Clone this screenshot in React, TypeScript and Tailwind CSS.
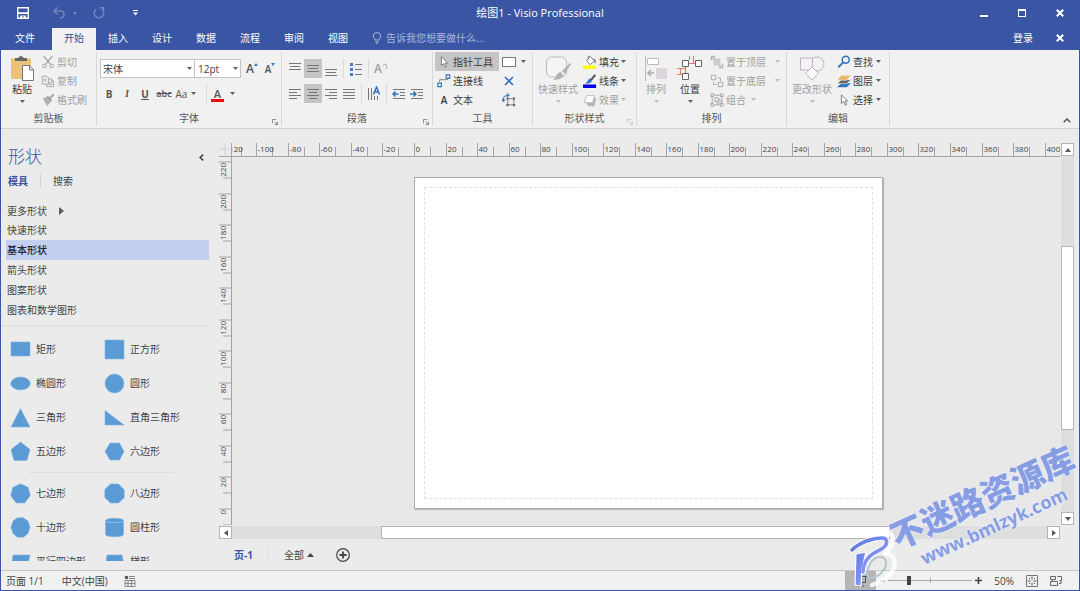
import type { ReactNode } from "react";
import clsx from "clsx";

const tabs = ["开始", "插入", "设计", "数据", "流程", "审阅", "视图"];
const stencils = ["快速形状", "基本形状", "箭头形状", "图案形状", "图表和数学图形"];

const BLUE = "#5b9bd5";
const INK = "#5a5a5a";

function Caret({ dim = false }: { dim?: boolean }) {
  return (
    <svg viewBox="0 0 5 3" className={clsx("h-[3px] w-[5px] shrink-0", dim ? "text-[#bdbdbd]" : "text-[#606060]")}>
      <path d="M0 0h5L2.500 3z" fill="currentColor" />
    </svg>
  );
}

function Icon({ children, className = "size-4", box = "0 0 16 16" }: { children: ReactNode; className?: string; box?: string }) {
  return (
    <svg viewBox={box} className={clsx("shrink-0", className)} fill="none" stroke="currentColor" aria-hidden="true">
      {children}
    </svg>
  );
}

function Group({ label, launcher, dimLauncher, className, children }: {
  label: string;
  launcher?: boolean;
  dimLauncher?: boolean;
  className?: string;
  children: ReactNode;
}) {
  return (
    <section aria-label={label} className={clsx("flex shrink-0 flex-col gap-px border-r border-[#d8d8d8]", className)}>
      <div className="h-[57px]">{children}</div>
      <div className="relative h-4 text-center leading-4 text-[#555]">
        {label}
        {launcher && (
          <button aria-label={`${label}设置`} className={clsx("absolute right-[3px] bottom-px", dimLauncher ? "text-[#c4c4c4]" : "text-[#777]")}>
            <Icon className="size-1.5" box="0 0 7 7">
              <path d="M.5 5V.5H5M3 3l3 3M6.500 3v3.500H3" />
            </Icon>
          </button>
        )}
      </div>
    </section>
  );
}

function SmallButton({ icon, label, dim, caret, active, className }: {
  icon: ReactNode;
  label: string;
  dim?: boolean;
  caret?: boolean;
  active?: boolean;
  className?: string;
}) {
  return (
    <button className={clsx("flex h-[19px] items-center gap-0.5 whitespace-nowrap", dim ? "text-[#a0a0a0]" : "text-[#3c3c3c]", active && "bg-[#c5c5c5]", className)}>
      {icon}
      <span>{label}</span>
      {caret && <span className="ml-auto"><Caret dim={dim} /></span>}
    </button>
  );
}

function BigButton({ icon, label, dim, className }: { icon: ReactNode; label: string; dim?: boolean; className?: string }) {
  return (
    <button className={clsx("flex h-[57px] flex-col items-center whitespace-nowrap pt-1", dim ? "text-[#a0a0a0]" : "text-[#3c3c3c]", className)}>
      {icon}
      <span className="leading-4">{label}</span>
      <span className="mt-[3px]"><Caret dim={dim} /></span>
    </button>
  );
}

function ToolButton({ label, active, children, className = "w-[18px]" }: { label: string; active?: boolean; children: ReactNode; className?: string }) {
  return (
    <button aria-label={label} className={clsx("flex h-[19px] shrink-0 items-center justify-center text-[#555]", active && "bg-[#c5c5c5]", className)}>
      {children}
    </button>
  );
}

const Sep = () => <span className="mx-[3px] h-[19px] w-px shrink-0 bg-[#dadada]" />;

// horizontal rules given as [y, x1, x2]
function Lines({ rows }: { rows: number[][] }) {
  return (
    <Icon className="h-4 w-3.5" box="0 0 14 16">
      {rows.map(([y, a, b]) => <path key={y} d={`M${a} ${y}.5H${b}`} stroke="#777" />)}
    </Icon>
  );
}

function Close() {
  return <Icon className="size-2" box="0 0 8 8"><path d="M.8.800l6.400 6.400M7.200.800L.8 7.200" strokeWidth="2" /></Icon>;
}

const pointer = <path d="M5 2v10l2.500-2.200L9.500 14l1.500-.8L9.200 9.300h3z" stroke="#666" fill="#fff" strokeWidth=".9" />;

function TitleBar() {
  return (
    <header className="bg-[#3955a3] text-white">
      <div className="relative flex h-[27px] items-center pb-[3px]">
        <div className="flex items-center pl-4">
          <button aria-label="保存">
            <Icon className="size-3" box="0 0 12 12">
              <path d="M.7.700h10.600v10.600H.7z" strokeWidth="1.400" />
              <path d="M1 5.300h10V7H1zM3.200 8.500h5.600V11H7V9.500H5.200V11h-2z" fill="currentColor" stroke="none" />
            </Icon>
          </button>
          <button aria-label="撤消" className="ml-6 flex items-center gap-2 text-[#7185bf]">
            <Icon className="size-3" box="0 0 12 12"><path d="M4.500.500L1 4l3.500 3.500M1 4h6.500c2 0 3.500 1.500 3.500 3.500S9.500 11 7 11" strokeWidth="1.500" /></Icon>
            <svg viewBox="0 0 4 3" className="h-[3px] w-1"><path d="M0 0h4L2 3z" fill="currentColor" /></svg>
          </button>
          <button aria-label="恢复" className="ml-4 text-[#7185bf]">
            <Icon className="size-3" box="0 0 12 12"><path d="M3 2.200A4.800 4.800 0 1 0 9 2.200M6.500.800h4v4" strokeWidth="1.500" /></Icon>
          </button>
          <button aria-label="自定义快速访问工具栏" className="ml-7">
            <Icon className="h-1.5 w-[5px]" box="0 0 5 6"><path d="M0 .5h5" /><path d="M0 2.500h5L2.500 5.500z" fill="currentColor" stroke="none" /></Icon>
          </button>
        </div>
        <h1 className="absolute inset-x-0 mx-auto w-fit text-[11px] leading-4">绘图1 - Visio Professional</h1>
        <div className="ml-auto flex items-center gap-[30px] pr-[15px]">
          <button aria-label="最小化" className="h-2 w-2 border-b-2 border-white" />
          <button aria-label="最大化" className="h-2 w-2 border border-t-2 border-white" />
          <button aria-label="关闭"><Close /></button>
        </div>
      </div>
      <nav className="flex h-[22px] items-stretch pl-[2px]">
        <button className="mr-[5px] w-11 pb-0.5">文件</button>
        {tabs.map((t, i) => (
          <button key={t} className={clsx("w-11 pb-0.5", i === 0 && "bg-[#f1f1f1] text-[#2c4aa0]")}>{t}</button>
        ))}
        <label className="ml-3 flex items-center gap-1 pb-0.5 text-[#a9b7dd]">
          <Icon className="h-3 w-2.5" box="0 0 10 12">
            <path d="M3.200 8C3.200 6.500 1.200 5.700 1.200 3.900a3.800 3.300 0 0 1 7.600 0C8.800 5.700 6.800 6.500 6.800 8zM3.200 9.800h3.600M4 11.400h2" />
          </Icon>
          <input aria-label="告诉我" placeholder="告诉我您想要做什么..." className="w-36 bg-transparent outline-none placeholder:text-[#a9b7dd]" />
        </label>
        <a href="#signin" className="ml-auto self-center pb-0.5">登录</a>
        <button aria-label="关闭文档" className="ml-[23px] pr-[15px] pb-0.5"><Close /></button>
      </nav>
    </header>
  );
}

function Ribbon() {
  return (
    <div className="flex shrink-0 border-b border-[#d2d2d2] bg-[#f1f1f1] pt-0.5 pb-0.5">
      <Group label="剪贴板" className="w-24">
        <div className="flex pl-2">
          <BigButton
            label="粘贴"
            className="w-[26px]"
            icon={
              <Icon className="h-[25px] w-6" box="0 0 24 25">
                <path d="M1 2.500h20V23H1z" fill="#ecc27b" stroke="none" />
                <path d="M5 5V2h3.500c0-2.500 5-2.500 5 0H17v3z" fill="#666" stroke="none" />
                <path d="M12.500 9.500h7l4 4.500v10.500h-11z" fill="#fff" stroke="#777" />
                <path d="M19.500 9.500V14h4" stroke="#777" />
              </Icon>
            }
          />
          <div className="ml-1.5">
            <SmallButton dim label="剪切" icon={<Icon className="size-3.5"><path d="M3 1l8 10M13 1L5 11" strokeWidth="1.400" /><circle cx="3.800" cy="12.500" r="2" /><circle cx="12.200" cy="12.500" r="2" /></Icon>} />
            <SmallButton dim label="复制" icon={<Icon className="size-3.5"><path d="M1.500 2.500h5l2 2v7h-7zM3 6h3M3 8h3M8.500 5.500h3l3 3v6h-8v-3M12 5.500v3h2.500M9 10h4M9 12h4" /></Icon>} />
            <SmallButton dim label="格式刷" icon={<Icon className="size-3.5"><path d="M2 6l6-2 4 5-5 6z" fill="#b3b3b3" stroke="none" /><path d="M14.500 1.500L9 7M7 4l5 5" strokeWidth="2.200" /></Icon>} />
          </div>
        </div>
      </Group>

      <Group label="字体" launcher className="w-[185px]">
        <div className="flex flex-col gap-1.5 pt-[7px] pl-[3px]">
          <div className="flex items-center">
            <div className="relative">
              <select aria-label="字体" className="h-[19px] w-[95px] appearance-none border border-[#c3c3c3] bg-white pl-0.5 text-[#444]">
                <option>宋体</option>
              </select>
              <span className="pointer-events-none absolute top-2 right-[3px] flex"><Caret /></span>
            </div>
            <div className="relative">
              <select aria-label="字号" className="h-[19px] w-[46px] appearance-none border border-l-0 border-[#c3c3c3] bg-white pl-[3px] text-[#444]">
                <option>12pt</option>
              </select>
              <span className="pointer-events-none absolute top-2 right-[3px] flex"><Caret /></span>
            </div>
            <ToolButton label="增大字号" className="ml-0.5 w-[18px]">
              <span className="text-xs font-semibold">A</span>
              <svg viewBox="0 0 4 3" className="mb-2 h-[3px] w-1"><path d="M2 0l2 3H0z" fill="#3a76b8" /></svg>
            </ToolButton>
            <ToolButton label="减小字号">
              <span className="text-[10px] font-semibold">A</span>
              <svg viewBox="0 0 4 3" className="mb-2 h-[3px] w-1"><path d="M0 0h4L2 3z" fill="#3a76b8" /></svg>
            </ToolButton>
          </div>
          <div className="flex items-center">
            <ToolButton label="加粗"><b>B</b></ToolButton>
            <ToolButton label="倾斜"><i className="font-serif font-bold">I</i></ToolButton>
            <ToolButton label="下划线"><b className="underline">U</b></ToolButton>
            <ToolButton label="删除线" className="w-5"><span className="text-[9px] font-semibold line-through">abc</span></ToolButton>
            <ToolButton label="更改大小写" className="w-6 gap-1"><span>Aa</span><Caret /></ToolButton>
            <span className="mr-0.5 ml-2 h-[19px] w-px bg-[#dadada]" />
            <ToolButton label="字体颜色" className="w-7 gap-1.5">
              <span className="h-4 w-[13px] border-b-[3px] border-[#ee0a0a] text-center text-[11px] leading-4 font-semibold">A</span>
              <Caret />
            </ToolButton>
          </div>
        </div>
      </Group>

      <Group label="段落" launcher className="w-[151px]">
        <div className="flex flex-col gap-1.5 pt-[7px] pl-1">
          <div className="flex">
            <ToolButton label="顶端对齐"><Lines rows={[[2, 1, 13], [5, 2, 12], [8, 1, 13]]} /></ToolButton>
            <ToolButton label="中部对齐" active><Lines rows={[[4, 1, 13], [7, 2, 12], [10, 1, 13]]} /></ToolButton>
            <ToolButton label="底端对齐"><Lines rows={[[8, 1, 13], [11, 2, 12], [14, 1, 13]]} /></ToolButton>
            <Sep />
            <ToolButton label="项目符号">
              <Icon className="h-4 w-3.5" box="0 0 14 16">
                <path d="M1 2h3v3H1zM1 7h3v3H1zM1 12h3v3H1z" fill="#3f7fc4" stroke="none" />
                <path d="M6 3.500h7M6 8.500h7M6 13.500h7" stroke="#777" />
              </Icon>
            </ToolButton>
            <Sep />
            <ToolButton label="旋转文本">
              <span className="text-xs font-semibold text-[#a0a0a0]">A</span>
              <Icon className="mb-1.5 size-1.5 text-[#a8a8a8]" box="0 0 6 6"><path d="M1 3L3 .8 5 3M3 1c2 1 2 3 1 5" /></Icon>
            </ToolButton>
          </div>
          <div className="flex">
            <ToolButton label="左对齐"><Lines rows={[[3, 1, 13], [6, 1, 9], [9, 1, 13], [12, 1, 9]]} /></ToolButton>
            <ToolButton label="居中" active><Lines rows={[[3, 1, 13], [6, 3, 11], [9, 1, 13], [12, 3, 11]]} /></ToolButton>
            <ToolButton label="右对齐"><Lines rows={[[3, 1, 13], [6, 5, 13], [9, 1, 13], [12, 5, 13]]} /></ToolButton>
            <ToolButton label="两端对齐"><Lines rows={[[3, 1, 13], [6, 1, 13], [9, 1, 13], [12, 1, 13]]} /></ToolButton>
            <Sep />
            <ToolButton label="文字方向">
              <Icon className="h-4 w-3.5" box="0 0 14 16">
                <path d="M1.500 2v12M4.500 2v12M7.500 10v4M10.500 10v4" stroke="#777" />
                <path d="M6.500 8.500L9.500 1l3 7.500M7.500 6h4" stroke="#2f74bd" strokeWidth="1.500" />
              </Icon>
            </ToolButton>
            <Sep />
            <ToolButton label="减少缩进">
              <Icon className="h-4 w-3.5" box="0 0 14 16">
                <path d="M1 3.500h12M8 6.500h5M8 9.500h5M1 12.500h12" stroke="#777" />
                <path d="M6.500 8H1M3.500 5.500L1 8l2.500 2.500" stroke="#2f74bd" strokeWidth="1.500" />
              </Icon>
            </ToolButton>
            <ToolButton label="增加缩进">
              <Icon className="h-4 w-3.5" box="0 0 14 16">
                <path d="M1 3.500h12M8 6.500h5M8 9.500h5M1 12.500h12" stroke="#777" />
                <path d="M0 8h5.500M3.500 5.500L6 8l-2.500 2.500" stroke="#2f74bd" strokeWidth="1.500" />
              </Icon>
            </ToolButton>
          </div>
        </div>
      </Group>

      <Group label="工具" className="w-[100px]">
        <div className="flex gap-[3px] pl-0.5">
          <div className="w-16">
            <SmallButton active label="指针工具" className="w-full pl-0.5" icon={<Icon className="size-3.5">{pointer}</Icon>} />
            <SmallButton label="连接线" className="w-full pl-0.5" icon={<Icon className="size-3.5"><path d="M3 9V6.500h9V5" stroke="#777" /><path d="M1 10.500h4v4H1zM10.500 1h4v4h-4z" stroke="#2f74bd" strokeWidth="1.300" /></Icon>} />
            <SmallButton label="文本" className="w-full pl-0.5" icon={<span className="w-3.5 text-center font-semibold">A</span>} />
          </div>
          <div>
            <ToolButton label="矩形工具" className="w-6 justify-start gap-[5px]">
              <span className="h-2.5 w-3.5 shrink-0 border border-[#777] bg-white" />
              <Caret />
            </ToolButton>
            <ToolButton label="连接点" className="w-3.5"><Icon className="size-2.5" box="0 0 10 10"><path d="M1 1l8 8M9 1L1 9" stroke="#2f74bd" strokeWidth="1.700" /></Icon></ToolButton>
            <ToolButton label="文本块" className="w-3.5">
              <Icon className="size-3.5">
                <path d="M6.500 6.500h7v7h-7z" stroke="#777" />
                <path d="M5 5h2.500v2.500H5zM12.500 5H15v2.500h-2.500zM5 12.500h2.500V15H5zM12.500 12.500H15V15h-2.500z" fill="#666" stroke="none" />
                <path d="M1.500 9c-.5-4 1.500-6.500 5.500-6.500M0 7l1.500 2.500L3.500 7.500M5.500.500L8 2.500 5.500 4.500" stroke="#2f74bd" strokeWidth="1.200" />
              </Icon>
            </ToolButton>
          </div>
        </div>
      </Group>

      <Group label="形状样式" launcher dimLauncher className="w-[104px]">
        <div className="flex gap-1 pl-1">
          <BigButton
            dim
            label="快速样式"
            className="w-[42px]"
            icon={
              <Icon className="h-[25px] w-[26px]" box="0 0 26 25">
                <rect x="1.500" y="1" width="20" height="20" rx="5" fill="#f6f3f6" stroke="#bdb8bd" />
                <path d="M25 7l-8 8 3 3 6-10z" fill="#b5b2b5" stroke="none" />
                <path d="M15.500 16l3 3c-1 4-6 5-11 5 4-1 3-7 8-8z" fill="#b5b2b5" stroke="none" />
              </Icon>
            }
          />
          <div className="w-[43px]">
            <SmallButton caret label="填充" className="w-full" icon={<Icon className="size-3.5"><path d="M4 6l5-4 4 5-5 4z" fill="#fff" stroke="#777" /><path d="M6 5V1.500h2" stroke="#777" /><path d="M12 4c3 1 3 4 2 6z" fill="#3a6fae" stroke="none" /><path d="M0 12h15v4H0z" fill="#ffff00" stroke="none" /></Icon>} />
            <SmallButton caret label="线条" className="w-full" icon={<Icon className="size-3.5"><path d="M14 1L9 7" stroke="#555" strokeWidth="2.500" /><path d="M10 7c0 3-3 4-8 4 3-1 3-5 6-6z" fill="#2f74bd" stroke="none" /><path d="M0 12h15v4H0z" fill="#0000e6" stroke="none" /></Icon>} />
            <SmallButton dim caret label="效果" className="w-full" icon={<Icon className="size-3.5"><path d="M3 11l3 4h7l2-8-2-3z" fill="#b9b4b9" stroke="none" /><path d="M4 3h9l-2 8H1.500z" fill="#fff" stroke="#bbb" /></Icon>} />
          </div>
        </div>
      </Group>

      <Group label="排列" className="w-[150px]">
        <div className="flex pl-1">
          <BigButton
            dim
            label="排列"
            className="w-[30px]"
            icon={
              <Icon className="h-[25px] w-6" box="0 0 24 25">
                <path d="M1.500 0v25" stroke="#bbb" />
                <path d="M3.500 2.500h11v6h-11z" fill="#fff" stroke="#bbb" />
                <path d="M12 12h11v11H12z" fill="#dcd5dc" stroke="none" />
                <path d="M10 17H4M7 14l-3 3 3 3" stroke="#aaa" strokeWidth="1.600" />
              </Icon>
            }
          />
          <BigButton
            label="位置"
            className="ml-0.5 w-[34px]"
            icon={
              <Icon className="h-[25px] w-[26px]" box="0 0 26 25">
                <path d="M11.500 7.500h7M12.500 0v4M16.500 0v7M0 12.500h8M8.500 10v8M0 18.500h5M3.500 12.500v6" stroke="#e08070" strokeWidth="1.200" />
                <path d="M5.500 4.500h6v6h-6zM18.500 4.500h6v6h-6zM5.500 17.500h6v6h-6z" fill="#fff" stroke="#666" />
              </Icon>
            }
          />
          <div className="ml-[3px] w-[70px]">
            <SmallButton dim caret label="置于顶层" className="w-full" icon={<Icon className="size-3.5"><path d="M4 4h8v8H4z" fill="#d0cad0" stroke="none" /><path d="M1.500 6V1.500H6M14.500 10v4.500H10M4 1.500v3H1M10 12.500h3" /></Icon>} />
            <SmallButton dim caret label="置于底层" className="w-full" icon={<Icon className="size-3.5"><path d="M1.500 1.500h5v5h-5zM9.500 9.500h5v5h-5zM9 4.500h3V8M4 9v3h3.500" /></Icon>} />
            <SmallButton dim caret label="组合" className="w-[46px]" icon={<Icon className="size-3.5"><path d="M1 1h3v3H1zM12 1h3v3h-3zM1 12h3v3H1zM12 12h3v3h-3zM4 2.500h8M2.500 4v8M13.500 4v8M4 13.500h8M5.500 5.500h4v4h-4zM7.500 9.500v2h4v-4h-2" /></Icon>} />
          </div>
        </div>
      </Group>

      <Group label="编辑" className="w-[103px]">
        <div className="flex gap-1 pl-1">
          <BigButton
            dim
            label="更改形状"
            className="w-[42px]"
            icon={
              <Icon className="h-[25px] w-[26px]" box="0 0 26 25">
                <circle cx="18" cy="8" r="7" fill="#f6f1f6" stroke="#bbb6bb" />
                <path d="M1.500 2h12v12h-12z" fill="#f6f1f6" stroke="#bbb6bb" />
                <path d="M13 11l6.500 6.500L13 24l-6.500-6.500z" fill="#fbf7fb" stroke="#bbb6bb" />
              </Icon>
            }
          />
          <div className="w-11">
            <SmallButton caret label="查找" className="w-full" icon={<Icon className="size-3.5"><circle cx="10" cy="5.500" r="4" stroke="#2f74bd" strokeWidth="1.700" /><path d="M7 8.500L1.500 14" stroke="#2f74bd" strokeWidth="2.200" /></Icon>} />
            <SmallButton caret label="图层" className="w-full" icon={<Icon className="size-3.5"><path d="M5 10.500h11l-5 4.500H0z" fill="#2f74bd" stroke="none" /><path d="M5 6.500h11L11 11H0z" fill="#666" stroke="#f1f1f1" strokeWidth=".7" /><path d="M5 1.500h11L11 7H0z" fill="#e8b465" stroke="#f1f1f1" strokeWidth=".7" /></Icon>} />
            <SmallButton caret label="选择" className="w-full" icon={<Icon className="size-3.5">{pointer}</Icon>} />
          </div>
        </div>
      </Group>

      <button aria-label="折叠功能区" className="mr-2 ml-auto self-end pb-[3px] text-[#555]">
        <Icon className="h-[5px] w-2" box="0 0 8 5"><path d="M.7 4.300L4 1l3.300 3.300" strokeWidth="1.500" /></Icon>
      </button>
    </div>
  );
}

const masters: { name: string; art: ReactNode }[] = [
  { name: "矩形", art: <path d="M1 3h19v14H1z" /> },
  { name: "正方形", art: <path d="M1 1h19v19H1z" /> },
  { name: "椭圆形", art: <ellipse cx="10.500" cy="10.500" rx="9.800" ry="6.500" /> },
  { name: "圆形", art: <circle cx="10.500" cy="10.500" r="9.500" /> },
  { name: "三角形", art: <path d="M10.500 1.500L20 20H1z" /> },
  { name: "直角三角形", art: <path d="M1 3.500L20 18H1z" /> },
  { name: "五边形", art: <path d="M10.500 1L20 8.500 17 19.500H4L1 8.500z" /> },
  { name: "六边形", art: <path d="M6 2h9.500l4.500 8.500-4.500 8.500H6L1 10.500z" /> },
  { name: "七边形", art: <path d="M10.500.800l7.800 3.700 1.900 8.300-5.500 7.200H6.300L.8 12.800l1.900-8.300z" /> },
  { name: "八边形", art: <path d="M6.500 1h8l5.700 5.700v8L14.500 20h-8L.8 14.500v-8z" /> },
  { name: "十边形", art: <path d="M7.500.800h6L18 4l2 6.500-2 6-4.500 3.700h-6L3 16.500l-2-6L3 4z" /> },
  { name: "圆柱形", art: <><path d="M1.500 3.500c0-3 18-3 18 0v14c0 3-18 3-18 0z" /><path d="M2 4.200c2 1.800 15 1.800 17 0" fill="none" stroke="#b9d6ef" /></> },
  { name: "平行四边形", art: <path d="M3 4h17l-3 13H1z" /> },
  { name: "梯形", art: <path d="M3 4h15l3 13H1z" /> },
];

function MasterGrid({ items }: { items: typeof masters }) {
  return (
    <div className="grid grid-cols-[94px_1fr] pl-[9px]">
      {items.map((m) => (
        <button key={m.name} className="flex h-[34px] items-center gap-[5px] whitespace-nowrap">
          <svg viewBox="0 0 21 21" className="size-[21px] shrink-0" fill={BLUE} stroke="#84b3df" strokeWidth=".6">{m.art}</svg>
          {m.name}
        </button>
      ))}
    </div>
  );
}

function ShapesPane() {
  return (
    <aside className="flex min-h-0 w-[218px] shrink-0 flex-col pb-[9px] text-[#444]">
      <div className="flex items-center justify-between pt-4 pr-[15px] pl-[7px]">
        <h2 className="text-[17px] leading-6 font-light text-[#3955a3]">形状</h2>
        <button aria-label="最小化形状窗口" className="text-[#444]">
          <Icon className="h-[7px] w-[5px]" box="0 0 5 7"><path d="M4.200.700L1.200 3.500l3 2.800" strokeWidth="1.600" /></Icon>
        </button>
      </div>
      <div className="flex h-6 items-center pl-[7px]">
        <button className="font-bold text-[#3955a3]">模具</button>
        <span className="mx-3 h-3.5 w-px bg-[#d4d4d4]" />
        <button>搜索</button>
      </div>
      <div className="mt-2 mr-2.5 flex flex-col border-b border-[#dcdcdc] pb-[5px] pl-[5px]">
        <button className="flex h-[19px] items-center gap-3 pl-px">
          更多形状
          <svg viewBox="0 0 5 8" className="h-2 w-[5px]"><path d="M0 0l5 4-5 4z" fill={INK} /></svg>
        </button>
        {stencils.map((s) => (
          <button key={s} className={clsx("h-5 pl-px text-left", s === "基本形状" && "bg-[#c3cef0] font-medium text-[#222]")}>{s}</button>
        ))}
      </div>
      <div className="min-h-0 flex-1 overflow-hidden pt-1.5">
        <MasterGrid items={masters.slice(0, 8)} />
        <div className="mt-1 mr-11 mb-[3px] ml-7 h-px bg-[#dedede]" />
        <MasterGrid items={masters.slice(8)} />
      </div>
    </aside>
  );
}

// pixels per 20 mm at 50% zoom
const STEP = 31.53;

function HorizontalRuler() {
  const marks = Array.from({ length: 27 }, (_, i) => i - 6);
  return (
    <svg className="h-full w-full border-b border-[#a3a3a3]" fontSize="8" fill="#444">
      <svg x="50%" overflow="visible">
        {marks.map((n) => {
          const x = Math.round(n * STEP - 232) + 0.5;
          return (
            <g key={n}>
              <path d={`M${x} 0V14M${x + 16} 4V14`} stroke="#a3a3a3" />
              <text x={x + 1} y="9">{n * 20}</text>
            </g>
          );
        })}
      </svg>
    </svg>
  );
}

function VerticalRuler() {
  const marks = Array.from({ length: 12 }, (_, i) => i);
  return (
    <svg className="h-full w-full border-r border-[#a3a3a3]" fontSize="8" fill="#444">
      <svg y="50%" overflow="visible">
        {marks.map((n) => {
          const y = Math.round(168 - n * STEP);
          return (
            <g key={n}>
              <path d={`M0 ${y}H13M4 ${y + 16}H13`} stroke="#a3a3a3" />
              <text textAnchor="end" transform={`translate(7 ${y + 1}) rotate(-90)`}>{n * 20}</text>
            </g>
          );
        })}
      </svg>
    </svg>
  );
}

function ScrollArrow({ d, label }: { d: string; label: string }) {
  return (
    <button aria-label={label} className="flex size-[13px] shrink-0 items-center justify-center border border-[#b5b5b5] bg-white">
      <svg viewBox="0 0 6 6" className="size-1.5"><path d={d} fill={INK} /></svg>
    </button>
  );
}

function Workspace() {
  return (
    <main className="flex min-w-0 flex-1 flex-col pt-3.5 pr-[5px]">
      <div className="grid min-h-0 flex-1 grid-cols-[13px_minmax(0,1fr)_14px] grid-rows-[14px_minmax(0,1fr)_14px]">
        <svg viewBox="0 0 13 14" className="border-r border-b border-[#a3a3a3]"><path d="M6.500 1v12M0 6.500h13" stroke="#d0d0d0" /></svg>
        <HorizontalRuler />
        <div className="row-span-2 ml-px flex flex-col bg-[#dedede]">
          <ScrollArrow label="向上滚动" d="M3 1l3 4H0z" />
          <div className="flex-[90_1_0%]" />
          <div className="flex-[183_1_0%] border border-[#b5b5b5] bg-white" />
          <div className="flex-[82_1_0%]" />
          <ScrollArrow label="向下滚动" d="M0 1h6L3 5z" />
        </div>
        <VerticalRuler />
        <div className="flex items-center justify-center overflow-hidden bg-[#e8e8e8] pt-1 pl-[5px]">
          <div className="h-[332px] w-[469px] shrink-0 border border-[#ababab] bg-white p-[9px] shadow-[1px_1px_1px_#bbb]">
            <div className="h-full border border-dashed border-[#e2e2e2]" />
          </div>
        </div>
        <div className="col-span-2 mt-px flex bg-[#dedede]">
          <ScrollArrow label="向左滚动" d="M5 0v6L1 3z" />
          <div className="flex-[149_1_0%]" />
          <div className="flex-[509_1_0%] border border-[#b5b5b5] bg-white" />
          <div className="flex-[157_1_0%]" />
          <ScrollArrow label="向右滚动" d="M1 0v6l4-3z" />
        </div>
      </div>
      <div className="flex h-[31px] items-center pl-[15px] text-[#444]">
        <button className="font-bold text-[#3955a3]">页-1</button>
        <span className="mx-[15px] h-3.5 w-px bg-[#e0e0e0]" />
        <button className="flex items-center gap-[3px]">
          全部
          <svg viewBox="0 0 7 4" className="h-1 w-[7px]"><path d="M0 4h7L3.500 0z" fill="#444" /></svg>
        </button>
        <button aria-label="插入页" className="ml-[22px]">
          <Icon className="size-3.5" box="0 0 14 14"><circle cx="7" cy="7" r="6.300" strokeWidth="1.200" /><path d="M7 3.500v7M3.500 7h7" strokeWidth="1.800" /></Icon>
        </button>
      </div>
    </main>
  );
}

function StatusBar() {
  return (
    <footer className="flex h-5 shrink-0 items-center border-t border-[#c8c8c8] bg-[#f1f1f1] pl-[5px] text-[#444]">
      <span>页面 1/1</span>
      <span className="ml-[18px]">中文(中国)</span>
      <button aria-label="宏" className="ml-4">
        <Icon className="size-3" box="0 0 12 12"><path d="M1 5.500h10v6H1zM1 8.500h10M4 5.500v6M7.500 5.500v6M5 1.500h6M5 3.500h6" stroke="#888" /><circle cx="2.500" cy="2.500" r="1.800" fill="#555" stroke="none" /></Icon>
      </button>
      <div className="ml-auto flex h-full items-center pr-[17px]">
        <button aria-label="演示模式" className="flex h-full w-[31px] items-center justify-center bg-[#b5b5b5]">
          <Icon className="size-3" box="0 0 12 12"><path d="M0 1.500h12M1.500 1.500v6h9v-6M6 7.500v2M3 11.500l3-2 3 2" stroke="#555" /></Icon>
        </button>
        <button aria-label="缩小" className="ml-1 h-[2px] w-[5px] bg-[#444]" />
        <div className="relative mx-[3px] flex items-center">
          <span className="absolute left-1/2 h-[5px] w-px bg-[#aaa]" />
          <input
            type="range"
            aria-label="显示比例"
            defaultValue={23}
            className="relative h-3 w-[84px] appearance-none bg-transparent [&::-webkit-slider-runnable-track]:h-px [&::-webkit-slider-runnable-track]:bg-[#aaa] [&::-webkit-slider-thumb]:-mt-1 [&::-webkit-slider-thumb]:h-[9px] [&::-webkit-slider-thumb]:w-1 [&::-webkit-slider-thumb]:appearance-none [&::-webkit-slider-thumb]:bg-[#444]"
          />
        </div>
        <button aria-label="放大"><Icon className="size-[7px]" box="0 0 7 7"><path d="M3.500 0v7M0 3.500h7" stroke="#444" strokeWidth="1.600" /></Icon></button>
        <span className="ml-3">50%</span>
        <button aria-label="适应窗口大小" className="ml-3">
          <Icon className="size-3" box="0 0 12 12"><path d="M.5.500h11v11H.5z" stroke="#777" /><path d="M6 1.500v3M6 7.500v3M1.500 6h3M7.500 6h3M3 3l1 1M9 3L8 4M3 9l1-1M9 9L8 8" stroke="#555" /></Icon>
        </button>
        <button aria-label="切换窗口" className="ml-3">
          <Icon className="size-3" box="0 0 12 12"><path d="M.5 1.500h5v3h-5zM7.500 1.500h4v4h-2M.5 6.500h7v4h-7zM2 4.500v2M9 8.500h2v-3" stroke="#666" /></Icon>
        </button>
      </div>
    </footer>
  );
}

function Watermark() {
  return (
    <div className="pointer-events-none absolute right-0 bottom-0 h-[150px] w-[240px]">
      <svg viewBox="0 0 240 150" className="h-full w-full overflow-visible">
        <defs>
          <linearGradient id="wm" x1="0" y1="0" x2="1" y2="1">
            <stop offset="0" stopColor="#5b79dc" />
            <stop offset=".6" stopColor="#8390f2" />
            <stop offset="1" stopColor="#8aaee6" />
          </linearGradient>
        </defs>
        <g fill="none" strokeLinecap="round" strokeLinejoin="round">
          <path d="M40 91c10-1 16 4 13 13-1 4-4 7-7 9 8 1 11 7 9 14-2 8-11 14-22 18" stroke="#fff" strokeWidth="4.500" opacity=".85" />
          <path d="M29 138c-2-12 5-21 12-21s8 8 3 14c-3 4-8 7-15 7" stroke="#b3c5cf" strokeWidth="2" />
          <path d="M13 110c8-8 21-12 30-12 6 0 6 6 1 10-4 3-9 4-13 8-4 4-7 10-7 16" stroke="#fff" strokeWidth="5.500" />
          <path d="M17 114l10-2-4 17-1 17-6-1z" fill="url(#wm)" stroke="#fff" strokeWidth="1.200" />
          <path d="M13 110c8-8 21-12 30-12 6 0 6 6 1 10-4 3-9 4-13 8-4 4-7 10-7 16" stroke="url(#wm)" strokeWidth="3.500" />
        </g>
        <g fill="#7e96e3" fillOpacity=".92" stroke="#e9edf8" strokeWidth="1.500" paintOrder="stroke" transform="rotate(-24.500 56 102)">
          <text x="55" y="110" fontSize="33" fontWeight="900">不迷路资源库</text>
          <text x="73" y="135" fontSize="18" fontWeight="700">www.bmlzyk.com</text>
        </g>
      </svg>
    </div>
  );
}

export default function App() {
  return (
    <div className="relative flex h-screen flex-col overflow-hidden border border-[#3955a3] bg-[#ebebeb] font-['Open_Sans','Noto_Sans_CJK_SC',sans-serif] text-[10px] leading-4">
      <TitleBar />
      <Ribbon />
      <div className="flex min-h-0 flex-1">
        <ShapesPane />
        <Workspace />
      </div>
      <StatusBar />
      <Watermark />
    </div>
  );
}
